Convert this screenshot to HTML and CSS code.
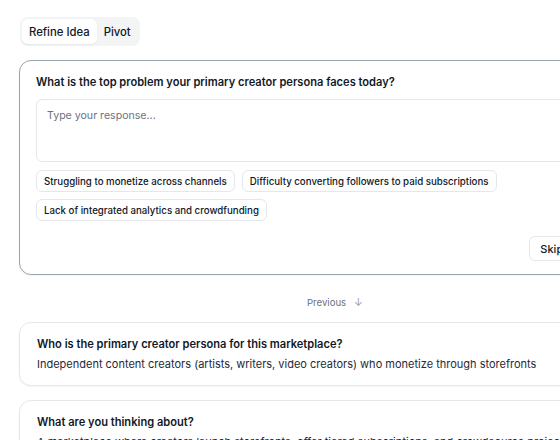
FILE: index.html
```html
<!DOCTYPE html>
<html>
<head>
<meta charset="utf-8">
<link rel="stylesheet" href="styles.css">
</head>
<body>
<div class="page">
  <div class="tabs">
    <button class="tab active">Refine Idea</button>
    <button class="tab">Pivot</button>
  </div>

  <div class="card main">
    <div class="question">What is the top problem your primary creator persona faces today?</div>
    <div class="textarea">Type your response...</div>
    <div class="chips">
      <span class="chip">Struggling to monetize across channels</span>
      <span class="chip">Difficulty converting followers to paid subscriptions</span>
      <span class="chip">Lack of integrated analytics and crowdfunding</span>
    </div>
    <div class="actions">
      <button class="btn">Skip</button>
      <button class="btn primary">Submit</button>
    </div>
  </div>

  <div class="previous">Previous <span class="arrow">↓</span></div>

  <div class="card answered">
    <div class="q">Who is the primary creator persona for this marketplace?</div>
    <div class="a">Independent content creators (artists, writers, video creators) who monetize through storefronts</div>
  </div>

  <div class="card answered">
    <div class="q">What are you thinking about?</div>
    <div class="a">A marketplace where creators launch storefronts, offer tiered subscriptions, and crowdsource projects</div>
  </div>
</div>
</body>
</html>
```

FILE: styles.css
```css
html, body {
  margin: 0;
  padding: 0;
  overflow: hidden;
  background: #ffffff;
}
body {
  font-family: Inter, "Noto Sans", sans-serif;
  color: #111827;
}
.page {
  width: 632px;
  padding: 17px 0 0 19px;
  display: flex;
  flex-direction: column;
}
.tabs {
  align-self: flex-start;
  display: flex;
  gap: 0;
  margin-left: 1px;
  padding: 2px;
  background: #f3f4f6;
  border-radius: 8px;
}
.tab {
  font-family: inherit;
  font-size: 11.3px;
  font-weight: 500;
  color: #111827;
  border: none;
  background: transparent;
  padding: 0 7px;
  height: 25px;
  border-radius: 6px;
  cursor: pointer;
}
.tab.active {
  background: #ffffff;
  box-shadow: 0 1px 2px rgba(0,0,0,0.06);
}
.card {
  border-radius: 12px;
  background: #fff;
}
.main {
  margin-top: 14px;
  border: 1px solid #9ca3af;
  padding: 13px 16px 13px 16px;
  box-shadow: 0 1px 2px rgba(0,0,0,0.05);
}
.question {
  font-size: 11.1px;
  font-weight: 600;
  line-height: 17px;
}
.textarea {
  margin-top: 8px;
  height: 63px;
  box-sizing: border-box;
  border: 1px solid #e5e7eb;
  border-radius: 6px;
  padding: 8px 10px;
  font-size: 10.6px;
  line-height: 16px;
  color: #6b7280;
}
.chips {
  margin-top: 8px;
  display: flex;
  flex-wrap: wrap;
  gap: 7px 7px;
}
.chip {
  display: inline-flex;
  align-items: center;
  height: 22px;
  box-sizing: border-box;
  padding: 0 7px;
  border: 1px solid #e5e7eb;
  border-radius: 6px;
  font-size: 9.7px;
  font-weight: 500;
  color: #111827;
  background: #fff;
}
.actions {
  margin-top: 15px;
  display: flex;
  justify-content: flex-end;
  gap: 8px;
}
.btn {
  font-family: inherit;
  font-size: 11px;
  font-weight: 500;
  height: 25px;
  padding: 0 10px;
  border: 1px solid #e5e7eb;
  border-radius: 6px;
  background: #fff;
  color: #111827;
}
.btn.primary {
  padding: 0 6.5px;
  background: #111827;
  border-color: #111827;
  color: #fff;
}
.previous {
  margin: 20px 0 12px;
  text-align: center;
  font-size: 9.6px;
  color: #6b7280;
  line-height: 14px;
}
.arrow {
  color: #9ca3af;
  margin-left: 5px;
  font-size: 11px;
}
.answered {
  border: 1px solid #e5e7eb;
  padding: 13px 17px 12px 17px;
  box-shadow: 0 1px 2px rgba(0,0,0,0.05);
  margin-bottom: 14px;
}
.q {
  font-size: 11.1px;
  font-weight: 600;
  line-height: 17px;
}
.a {
  margin-top: 3px;
  font-size: 11px;
  line-height: 17px;
  color: #1f2937;
  white-space: nowrap;
}
```
